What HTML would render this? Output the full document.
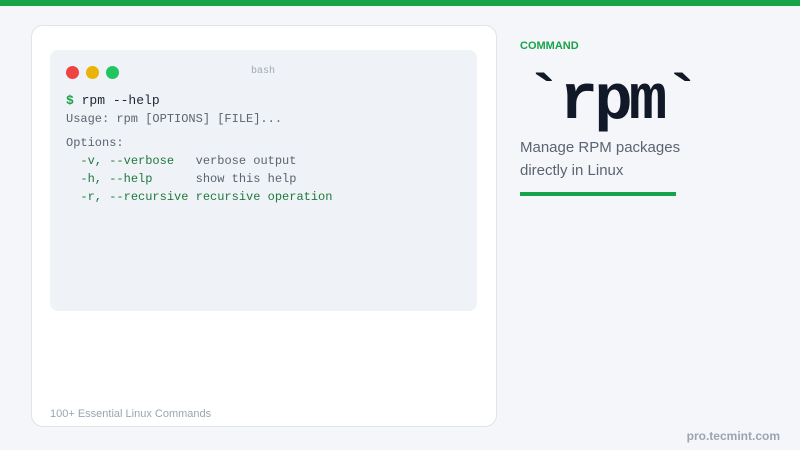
<!DOCTYPE html>
<html><head><style>
*{margin:0;padding:0;box-sizing:border-box}
body{width:800px;height:450px;background:#f5f6fa;position:relative;overflow:hidden;font-family:"Liberation Sans",sans-serif}
.top{position:absolute;left:0;top:0;width:800px;height:6px;background:#17a34a}
.card{position:absolute;left:31px;top:25px;width:466px;height:402px;background:#fff;border:1px solid #dfe3ea;border-radius:12px}
.term{position:absolute;left:50px;top:50px;width:427px;height:261px;background:#eff2f6;border-radius:8px}
.dot{position:absolute;top:66px;width:13px;height:13px;border-radius:50%}
.mono{font-family:"Liberation Mono",monospace}
.t{position:absolute;left:66px;font-size:12px;color:#5b6472;white-space:pre;line-height:18px}
.g{color:#1f7a3d}
</style></head><body>
<div class="top"></div>
<div class="card"></div>
<div class="term"></div>
<div class="dot" style="left:66px;background:#ef4444"></div>
<div class="dot" style="left:86px;background:#eab308"></div>
<div class="dot" style="left:106px;background:#22c55e"></div>
<div class="mono" style="position:absolute;left:251px;top:66px;font-size:10px;color:#a0aab8">bash</div>
<div class="t mono" style="top:92px;font-size:13px;color:#1e2533"><b style="color:#17a34a">$</b> rpm --help</div>
<div class="t mono" style="top:110px">Usage: rpm [OPTIONS] [FILE]...</div>
<div class="t mono" style="top:134px">Options:</div>
<div class="t mono" style="top:152px">  <span class="g">-v, --verbose</span>   verbose output</div>
<div class="t mono" style="top:170px">  <span class="g">-h, --help</span>      show this help</div>
<div class="t mono" style="top:188px">  <span class="g">-r, --recursive recursive operation</span></div>
<div style="position:absolute;left:50px;top:408px;font-size:11px;color:#9aa4b2">100+ Essential Linux Commands</div>
<div style="position:absolute;left:520px;top:40px;font-size:11px;font-weight:bold;color:#17a34a">COMMAND</div>
<div class="mono" style="position:absolute;left:525px;top:62px;font-size:64px;letter-spacing:-3.8px;font-weight:bold;color:#111827;line-height:80px">`rpm`</div>
<div style="position:absolute;left:520px;top:136px;font-size:15px;color:#5b6472;line-height:23px">Manage RPM packages<br>directly in Linux</div>
<div style="position:absolute;left:520px;top:192px;width:156px;height:4px;background:#17a34a"></div>
<div style="position:absolute;right:20px;top:429px;font-size:12px;font-weight:bold;color:#9aa4b2">pro.tecmint.com</div>
</body></html>
